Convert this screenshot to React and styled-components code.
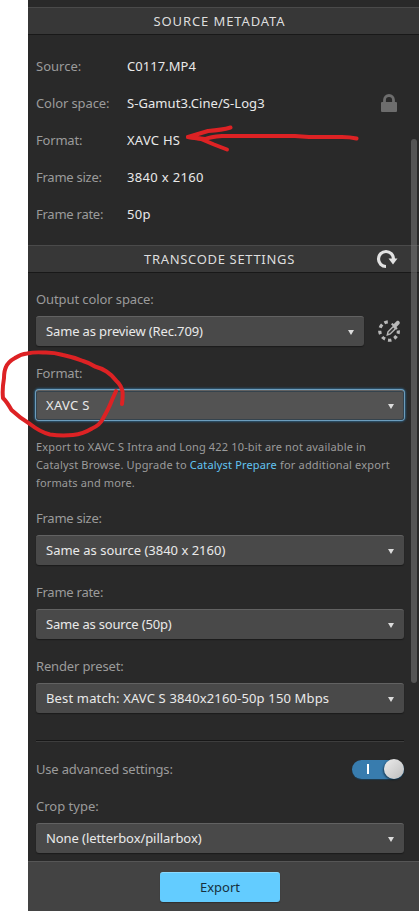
import React, { useState } from 'react';
import styled, { createGlobalStyle } from 'styled-components';

const colors = {
  panel: '#292929',
  header: '#373737',
  footer: '#434343',
  label: '#9b9b9b',
  text: '#e9e9e9',
  link: '#62c4f2',
  accent: '#63ccff',
  marker: '#dd2224',
};

const GlobalStyle = createGlobalStyle`
  body {
    margin: 0;
    background: #fff;
    font-family: 'Noto Sans', sans-serif;
    font-size: 13px;
    overflow: hidden;
  }
`;

const Page = styled.div`
  position: relative;
  display: flex;
  justify-content: flex-end;
  width: 419px;
  height: 911px;
  overflow: hidden;
`;

const Panel = styled.main`
  position: relative;
  display: flex;
  flex-direction: column;
  width: 391px;
  height: 911px;
  padding-top: 7px;
  box-sizing: border-box;
  background: ${colors.panel};
`;

const SectionHeader = styled.header`
  display: grid;
  grid-template-columns: 48px 1fr 48px;
  align-items: center;
  height: 28px;
  padding-right: 8px;
  box-sizing: border-box;
  background: ${colors.header};
  border-top: 1px solid #4a4a4a;
  border-bottom: 1px solid #181818;
`;

const SectionTitle = styled.h2`
  grid-column: 2;
  margin: 0;
  color: #dedede;
  font-size: 13px;
  font-weight: 400;
  line-height: 18px;
  text-align: center;
  white-space: nowrap;
  letter-spacing: ${(props) => props.$spacing || 0}px;
`;

const IconButton = styled.button`
  display: flex;
  align-items: center;
  justify-content: center;
  padding: 0;
  border: none;
  background: none;
  cursor: pointer;
`;

const PickerButton = styled(IconButton)`
  margin: 0 3px 0 1px;
`;

const Metadata = styled.dl`
  margin: 0;
  padding: 12px 22px 13px 8px;
`;

const MetadataRow = styled.div`
  display: grid;
  grid-template-columns: 91px 1fr auto;
  align-items: center;
  height: 37px;
`;

const MetadataLabel = styled.dt`
  color: ${colors.label};
  white-space: nowrap;
  letter-spacing: ${(props) => props.$spacing || 0}px;
`;

const MetadataValue = styled.dd`
  margin: 0;
  color: ${colors.text};
  white-space: nowrap;
  letter-spacing: ${(props) => props.$spacing || 0}px;
`;

const Settings = styled.section`
  display: flex;
  flex-direction: column;
  padding: 17px 15px 8px 8px;
`;

const Field = styled.div`
  display: flex;
  flex-direction: column;
  gap: 8px;
  margin-bottom: ${(props) => props.$after ?? 18}px;
`;

const FieldLabel = styled.label`
  color: ${colors.label};
  line-height: 18px;
  white-space: nowrap;
  letter-spacing: ${(props) => props.$spacing || 0}px;
`;

const FieldControl = styled.div`
  display: flex;
  align-items: center;
  gap: 12px;
`;

const SelectBox = styled.button`
  display: flex;
  flex: 1;
  align-items: center;
  justify-content: space-between;
  height: 30px;
  padding: 0 10px 2px;
  box-sizing: border-box;
  border: none;
  border-top: 1px solid #626262;
  border-radius: 3px;
  background: ${(props) => (props.$focused ? '#535353' : '#494949')};
  box-shadow: ${(props) =>
    props.$focused
      ? 'inset 0 0 0 1px #35434d, 0 0 0 1px #6c9dbd, 0 0 2px 2px #2c5673'
      : '0 1px 1px #1b1b1b'};
  color: ${colors.text};
  font: inherit;
  text-align: left;
  white-space: nowrap;
`;

const SelectText = styled.span`
  letter-spacing: ${(props) => props.$spacing || 0}px;
`;

const Caret = styled.span`
  width: 0;
  height: 0;
  margin-top: 3px;
  border-left: 3.5px solid transparent;
  border-right: 3.5px solid transparent;
  border-top: 5.5px solid #dcdcdc;
`;

const Note = styled.p`
  margin: 0 0 17px;
  color: ${colors.label};
  font-size: 11px;
  line-height: 18px;
`;

const NoteLine = styled.span`
  display: block;
  white-space: nowrap;
  letter-spacing: ${(props) => props.$spacing || 0}px;
`;

const NoteLink = styled.a`
  color: ${colors.link};
`;

const Divider = styled.hr`
  width: 100%;
  height: 1px;
  margin: 27px 0 17px;
  border: none;
  border-bottom: 1px solid #3d3d3d;
  background: #171717;
`;

const ToggleRow = styled.div`
  display: flex;
  align-items: center;
  justify-content: space-between;
  height: 20px;
  margin-bottom: 18px;
`;

const Toggle = styled.button`
  display: flex;
  align-items: center;
  justify-content: space-between;
  width: 52px;
  height: 19px;
  padding: 0 0 0 15px;
  border: none;
  border-radius: 10px;
  background: #387cae;
  box-shadow: 0 1px 1px #1d3c52;
`;

const ToggleMark = styled.span`
  width: 2px;
  height: 10px;
  background: #fff;
`;

const ToggleKnob = styled.span`
  width: 20px;
  height: 20px;
  border-radius: 50%;
  background: linear-gradient(135deg, #ececec, #bdbdbd);
  box-shadow: -1px 1px 2px rgba(0, 0, 0, 0.5);
`;

const Footer = styled.footer`
  display: flex;
  justify-content: center;
  height: 50px;
  padding: 10px 7px 0 0;
  margin-top: auto;
  box-sizing: border-box;
  border-top: 1px solid #565656;
  background: ${colors.footer};
`;

const ExportButton = styled.button`
  width: 120px;
  height: 30px;
  padding: 0 0 2px;
  border: none;
  border-top: 1px solid #8bdaff;
  border-radius: 3px;
  background: ${colors.accent};
  box-shadow: 0 1px 1px #303030;
  color: #17303e;
  font: inherit;
`;

const ScrollThumb = styled.div`
  position: absolute;
  top: 139px;
  right: 2px;
  width: 6px;
  height: 544px;
  border-radius: 3px;
  background: rgba(122, 122, 122, 0.55);
`;

const Markup = styled.svg`
  position: absolute;
  top: 0;
  left: 0;
  pointer-events: none;
`;

const LockIcon = () => (
  <svg width="16" height="18" viewBox="0 0 16 18">
    <path d="M3.5 9V6a4.5 4.5 0 0 1 9 0v3" fill="none" stroke="#6d6d6d" strokeWidth="2.8" />
    <rect y="8" width="16" height="10" rx="1" fill="#6d6d6d" />
  </svg>
);

const ResetIcon = () => (
  <svg width="22" height="20" viewBox="0 0 22 20">
    <path d="M10 17.5a7.5 7.5 0 1 1 7.5-7.5" fill="none" stroke="#e2e2e2" strokeWidth="3.2" />
    <path d="M12.5 9.5h9l-4.5 6z" fill="#e2e2e2" />
  </svg>
);

const PickerIcon = () => (
  <svg width="24" height="24" viewBox="0 0 24 24">
    <g fill="none" stroke="#b8b8b8" strokeWidth="3.2">
      <path d="M10.8 2.8a9.3 9.3 0 0 0-3.4 1" />
      <path d="M5.2 5.5a9.3 9.3 0 0 0-2 3.2" />
      <path d="M2.7 11.8a9.3 9.3 0 0 0 .8 3.4" />
      <path d="M5.2 18a9.3 9.3 0 0 0 2.900 2" />
      <path d="M11 21.200a9.3 9.3 0 0 0 3.400-.2" />
      <path d="M17.2 19.400a9.3 9.3 0 0 0 2.300-2.400" />
      <path d="M21 14.800a9.3 9.3 0 0 0 .3-3.300" />
    </g>
    <path d="M10.300 16l.7-3.2 5.300-5.300 2.200 2.200-5.300 5.300z" fill="#333" stroke="#b8b8b8" strokeWidth="1.4" />
    <path d="M14 5.200l1.400-1.300 1.400 1.200 2.700-2.800c1.800-1.500 4.300.8 2.900 2.800l-2.900 2.800 1.200 1.400-1.400 1.400z" fill="#b8b8b8" />
  </svg>
);

const Select = ({ label, value, labelSpacing, spacing, focused, after, children }) => (
  <Field $after={after}>
    <FieldLabel $spacing={labelSpacing}>{label}</FieldLabel>
    <FieldControl>
      <SelectBox type="button" $focused={focused}>
        <SelectText $spacing={spacing}>{value}</SelectText>
        <Caret />
      </SelectBox>
      {children}
    </FieldControl>
  </Field>
);

const metadata = [
  { label: 'Source:', value: 'C0117.MP4', spacing: 0.05 },
  { label: 'Color space:', value: 'S-Gamut3.Cine/S-Log3', labelSpacing: -0.1, spacing: 0.06, locked: true },
  { label: 'Format:', value: 'XAVC HS', labelSpacing: -0.2, spacing: 0.25 },
  { label: 'Frame size:', value: '3840 x 2160', labelSpacing: -0.25, spacing: 0.33 },
  { label: 'Frame rate:', value: '50p', labelSpacing: -0.25, spacing: 0.3 },
];

const App = () => {
  const [advanced, setAdvanced] = useState(true);

  return (
    <Page>
      <GlobalStyle />
      <Panel>
        <SectionHeader>
          <SectionTitle $spacing={0.9}>SOURCE METADATA</SectionTitle>
        </SectionHeader>
        <Metadata>
          {metadata.map((item) => (
            <MetadataRow key={item.label}>
              <MetadataLabel $spacing={item.labelSpacing}>{item.label}</MetadataLabel>
              <MetadataValue $spacing={item.spacing}>{item.value}</MetadataValue>
              {item.locked && <LockIcon />}
            </MetadataRow>
          ))}
        </Metadata>

        <SectionHeader>
          <SectionTitle $spacing={0.67}>TRANSCODE SETTINGS</SectionTitle>
          <IconButton type="button" aria-label="Reset">
            <ResetIcon />
          </IconButton>
        </SectionHeader>
        <Settings>
          <Select
            label="Output color space:"
            value="Same as preview (Rec.709)"
            labelSpacing={-0.1}
            spacing={-0.14}
          >
            <PickerButton type="button" aria-label="Pick color">
              <PickerIcon />
            </PickerButton>
          </Select>
          <Select label="Format:" value="XAVC S" labelSpacing={-0.2} spacing={0.3} focused />
          <Note>
            <NoteLine $spacing={0.16}>Export to XAVC S Intra and Long 422 10-bit are not available in</NoteLine>
            <NoteLine $spacing={0.17}>
              Catalyst Browse. Upgrade to <NoteLink>Catalyst Prepare</NoteLink> for additional export
            </NoteLine>
            <NoteLine $spacing={0.14}>formats and more.</NoteLine>
          </Note>
          <Select label="Frame size:" value="Same as source (3840 x 2160)" labelSpacing={-0.25} />
          <Select label="Frame rate:" value="Same as source (50p)" labelSpacing={-0.25} spacing={-0.18} />
          <Select
            label="Render preset:"
            value="Best match: XAVC S 3840x2160-50p 150 Mbps"
            labelSpacing={-0.15}
            spacing={0.15}
            after={0}
          />
          <Divider />
          <ToggleRow>
            <FieldLabel $spacing={-0.18}>Use advanced settings:</FieldLabel>
            <Toggle type="button" aria-pressed={advanced} onClick={() => setAdvanced(!advanced)}>
              <ToggleMark />
              <ToggleKnob />
            </Toggle>
          </ToggleRow>
          <Select label="Crop type:" value="None (letterbox/pillarbox)" spacing={-0.08} after={0} />
        </Settings>

        <Footer>
          <ExportButton type="button">Export</ExportButton>
        </Footer>
        <ScrollThumb />
      </Panel>

      <Markup width="419" height="911" viewBox="0 0 419 911">
        <g fill="none" stroke={colors.marker} strokeWidth="4" strokeLinecap="round" strokeLinejoin="round">
          <path d="M356.5 138.5Q350 137 342 137L309 137L295 136L222 136Q210 137 205 139L188 137L208 131Q222 130 230.500 127.500" />
          <path d="M188 137L201 139L214 144.500L227 149.500" />
          <path d="M122 404Q123 396 122.500 391.500Q121 385 116.500 381Q112 375 106.500 371.500Q101 368 95 366.500Q90 363 83 361Q73 357 63 355Q53 352 43 352.500Q34 352 27 353.500Q21 354 15 358Q8 362 6 367Q4 371 4 378Q2 390 3 398Q7 402 11.500 410Q20 418 30 424Q40 432 50 434.500Q61 436 73 435Q83 434 92 428.500Q100 425 103 418.500Q109 408 112 400L116 391" />
        </g>
      </Markup>
    </Page>
  );
};

export default App;
